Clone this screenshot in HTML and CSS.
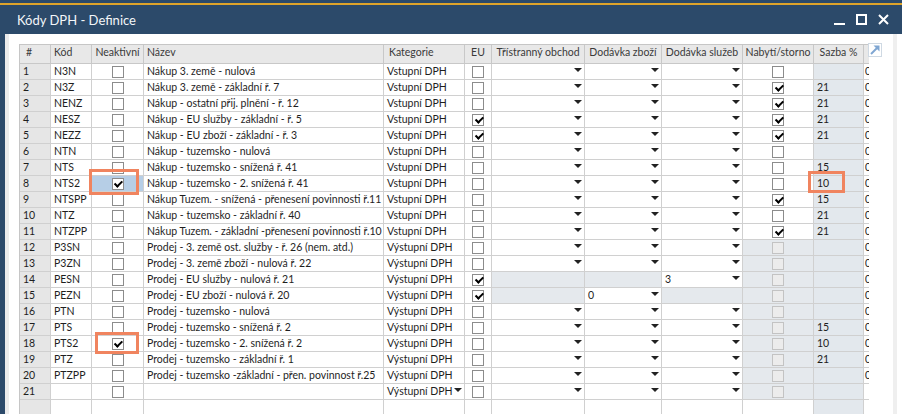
FILE: index.html
```html
<!DOCTYPE html>
<html>
<head>
    <meta charset="utf-8">
    <title>Kódy DPH - Definice</title>
    <link rel="stylesheet" href="styles.css">
</head>
<body>
    <div class="window">
        <div class="titlebar">
            <h1>Kódy DPH - Definice</h1>
            <div class="controls">
                <span class="ctl ctl-min"></span>
                <span class="ctl ctl-max"></span>
                <svg class="ctl" width="11" height="11" viewBox="0 0 11 11"><path d="M1 1L10 10M10 1L1 10" stroke="#fff" stroke-width="2"/></svg>
            </div>
        </div>
        <div class="frame">
            <div class="gutter"></div>
            <div class="content">
                <div class="grid-wrap">
                    <table class="grid">
                        <tr>
                            <th class="w-num">#</th>
                            <th class="w-code">Kód</th>
                            <th class="w-inact c">Neaktivní</th>
                            <th class="w-name">Název</th>
                            <th class="w-cat">Kategorie</th>
                            <th class="w-eu c">EU</th>
                            <th class="w-tri c">Třístranný obchod</th>
                            <th class="w-goods c">Dodávka zboží</th>
                            <th class="w-serv c">Dodávka služeb</th>
                            <th class="w-acq c">Nabytí/storno</th>
                            <th class="w-rate c">Sazba %</th>
                            <th class="w-rest"></th>
                        </tr>
                        <tr>
                            <td class="num">1</td><td>N3N</td><td class="chk"><i class="cb"></i></td><td>Nákup 3. země - nulová</td><td>Vstupní DPH</td><td class="chk"><i class="cb"></i></td>
                            <td class="drop"><div class="dd"><span></span><b class="arr"></b></div></td><td class="drop"><div class="dd"><span></span><b class="arr"></b></div></td><td class="drop"><div class="dd"><span></span><b class="arr"></b></div></td>
                            <td class="chk"><i class="cb"></i></td><td class="rate"></td><td class="cut">0</td>
                        </tr>
                        <tr>
                            <td class="num">2</td><td>N3Z</td><td class="chk"><i class="cb"></i></td><td>Nákup 3. země - základní ř. 7</td><td>Vstupní DPH</td><td class="chk"><i class="cb"></i></td>
                            <td class="drop"><div class="dd"><span></span><b class="arr"></b></div></td><td class="drop"><div class="dd"><span></span><b class="arr"></b></div></td><td class="drop"><div class="dd"><span></span><b class="arr"></b></div></td>
                            <td class="chk"><i class="cb on"></i></td><td class="rate">21</td><td class="cut">0</td>
                        </tr>
                        <tr>
                            <td class="num">3</td><td>NENZ</td><td class="chk"><i class="cb"></i></td><td>Nákup - ostatní přij. plnění - ř. 12</td><td>Vstupní DPH</td><td class="chk"><i class="cb"></i></td>
                            <td class="drop"><div class="dd"><span></span><b class="arr"></b></div></td><td class="drop"><div class="dd"><span></span><b class="arr"></b></div></td><td class="drop"><div class="dd"><span></span><b class="arr"></b></div></td>
                            <td class="chk"><i class="cb on"></i></td><td class="rate">21</td><td class="cut">0</td>
                        </tr>
                        <tr>
                            <td class="num">4</td><td>NESZ</td><td class="chk"><i class="cb"></i></td><td>Nákup - EU služby - základní - ř. 5</td><td>Vstupní DPH</td><td class="chk"><i class="cb on"></i></td>
                            <td class="drop"><div class="dd"><span></span><b class="arr"></b></div></td><td class="drop"><div class="dd"><span></span><b class="arr"></b></div></td><td class="drop"><div class="dd"><span></span><b class="arr"></b></div></td>
                            <td class="chk"><i class="cb on"></i></td><td class="rate">21</td><td class="cut">0</td>
                        </tr>
                        <tr>
                            <td class="num">5</td><td>NEZZ</td><td class="chk"><i class="cb"></i></td><td>Nákup - EU zboží - základní - ř. 3</td><td>Vstupní DPH</td><td class="chk"><i class="cb on"></i></td>
                            <td class="drop"><div class="dd"><span></span><b class="arr"></b></div></td><td class="drop"><div class="dd"><span></span><b class="arr"></b></div></td><td class="drop"><div class="dd"><span></span><b class="arr"></b></div></td>
                            <td class="chk"><i class="cb on"></i></td><td class="rate">21</td><td class="cut">0</td>
                        </tr>
                        <tr>
                            <td class="num">6</td><td>NTN</td><td class="chk"><i class="cb"></i></td><td>Nákup - tuzemsko - nulová</td><td>Vstupní DPH</td><td class="chk"><i class="cb"></i></td>
                            <td class="drop"><div class="dd"><span></span><b class="arr"></b></div></td><td class="drop"><div class="dd"><span></span><b class="arr"></b></div></td><td class="drop"><div class="dd"><span></span><b class="arr"></b></div></td>
                            <td class="chk"><i class="cb"></i></td><td class="rate"></td><td class="cut">0</td>
                        </tr>
                        <tr>
                            <td class="num">7</td><td>NTS</td><td class="chk"><i class="cb"></i></td><td>Nákup - tuzemsko - snížená ř. 41</td><td>Vstupní DPH</td><td class="chk"><i class="cb"></i></td>
                            <td class="drop"><div class="dd"><span></span><b class="arr"></b></div></td><td class="drop"><div class="dd"><span></span><b class="arr"></b></div></td><td class="drop"><div class="dd"><span></span><b class="arr"></b></div></td>
                            <td class="chk"><i class="cb"></i></td><td class="rate">15</td><td class="cut">0</td>
                        </tr>
                        <tr>
                            <td class="num">8</td><td>NTS2</td><td class="chk sel"><i class="cb on"></i></td><td>Nákup - tuzemsko - 2. snížená ř. 41</td><td>Vstupní DPH</td><td class="chk"><i class="cb"></i></td>
                            <td class="drop"><div class="dd"><span></span><b class="arr"></b></div></td><td class="drop"><div class="dd"><span></span><b class="arr"></b></div></td><td class="drop"><div class="dd"><span></span><b class="arr"></b></div></td>
                            <td class="chk"><i class="cb"></i></td><td class="rate">10</td><td class="cut">0</td>
                        </tr>
                        <tr>
                            <td class="num">9</td><td>NTSPP</td><td class="chk"><i class="cb"></i></td><td>Nákup Tuzem. - snížená - přenesení povinnosti ř.11</td><td>Vstupní DPH</td><td class="chk"><i class="cb"></i></td>
                            <td class="drop"><div class="dd"><span></span><b class="arr"></b></div></td><td class="drop"><div class="dd"><span></span><b class="arr"></b></div></td><td class="drop"><div class="dd"><span></span><b class="arr"></b></div></td>
                            <td class="chk"><i class="cb on"></i></td><td class="rate">15</td><td class="cut">0</td>
                        </tr>
                        <tr>
                            <td class="num">10</td><td>NTZ</td><td class="chk"><i class="cb"></i></td><td>Nákup - tuzemsko - základní ř. 40</td><td>Vstupní DPH</td><td class="chk"><i class="cb"></i></td>
                            <td class="drop"><div class="dd"><span></span><b class="arr"></b></div></td><td class="drop"><div class="dd"><span></span><b class="arr"></b></div></td><td class="drop"><div class="dd"><span></span><b class="arr"></b></div></td>
                            <td class="chk"><i class="cb"></i></td><td class="rate">21</td><td class="cut">0</td>
                        </tr>
                        <tr>
                            <td class="num">11</td><td>NTZPP</td><td class="chk"><i class="cb"></i></td><td>Nákup Tuzem. - základní -přenesení povinnosti ř.10</td><td>Vstupní DPH</td><td class="chk"><i class="cb"></i></td>
                            <td class="drop"><div class="dd"><span></span><b class="arr"></b></div></td><td class="drop"><div class="dd"><span></span><b class="arr"></b></div></td><td class="drop"><div class="dd"><span></span><b class="arr"></b></div></td>
                            <td class="chk"><i class="cb on"></i></td><td class="rate">21</td><td class="cut">0</td>
                        </tr>
                        <tr>
                            <td class="num">12</td><td>P3SN</td><td class="chk"><i class="cb"></i></td><td>Prodej - 3. země ost. služby - ř. 26 (nem. atd.)</td><td>Výstupní DPH</td><td class="chk"><i class="cb"></i></td>
                            <td class="drop"><div class="dd"><span></span><b class="arr"></b></div></td><td class="drop"><div class="dd"><span></span><b class="arr"></b></div></td><td class="drop"><div class="dd"><span></span><b class="arr"></b></div></td>
                            <td class="chk na"><i class="cb off"></i></td><td class="rate"></td><td class="cut">0</td>
                        </tr>
                        <tr>
                            <td class="num">13</td><td>P3ZN</td><td class="chk"><i class="cb"></i></td><td>Prodej - 3. země zboží - nulová ř. 22</td><td>Výstupní DPH</td><td class="chk"><i class="cb"></i></td>
                            <td class="drop"><div class="dd"><span></span><b class="arr"></b></div></td><td class="drop"><div class="dd"><span></span><b class="arr"></b></div></td><td class="drop"><div class="dd"><span></span><b class="arr"></b></div></td>
                            <td class="chk na"><i class="cb off"></i></td><td class="rate"></td><td class="cut">0</td>
                        </tr>
                        <tr>
                            <td class="num">14</td><td>PESN</td><td class="chk"><i class="cb"></i></td><td>Prodej - EU služby - nulová ř. 21</td><td>Výstupní DPH</td><td class="chk"><i class="cb on"></i></td>
                            <td class="na"></td><td class="na"></td><td class="drop"><div class="dd"><span>3</span><b class="arr"></b></div></td>
                            <td class="chk na"><i class="cb off"></i></td><td class="rate"></td><td class="cut">0</td>
                        </tr>
                        <tr>
                            <td class="num">15</td><td>PEZN</td><td class="chk"><i class="cb"></i></td><td>Prodej - EU zboží - nulová ř. 20</td><td>Výstupní DPH</td><td class="chk"><i class="cb on"></i></td>
                            <td class="na"></td><td class="drop"><div class="dd"><span>0</span><b class="arr"></b></div></td><td class="na"></td>
                            <td class="chk na"><i class="cb off"></i></td><td class="rate"></td><td class="cut">0</td>
                        </tr>
                        <tr>
                            <td class="num">16</td><td>PTN</td><td class="chk"><i class="cb"></i></td><td>Prodej - tuzemsko - nulová</td><td>Výstupní DPH</td><td class="chk"><i class="cb"></i></td>
                            <td class="drop"><div class="dd"><span></span><b class="arr"></b></div></td><td class="drop"><div class="dd"><span></span><b class="arr"></b></div></td><td class="drop"><div class="dd"><span></span><b class="arr"></b></div></td>
                            <td class="chk na"><i class="cb off"></i></td><td class="rate"></td><td class="cut">0</td>
                        </tr>
                        <tr>
                            <td class="num">17</td><td>PTS</td><td class="chk"><i class="cb"></i></td><td>Prodej - tuzemsko - snížená ř. 2</td><td>Výstupní DPH</td><td class="chk"><i class="cb"></i></td>
                            <td class="drop"><div class="dd"><span></span><b class="arr"></b></div></td><td class="drop"><div class="dd"><span></span><b class="arr"></b></div></td><td class="drop"><div class="dd"><span></span><b class="arr"></b></div></td>
                            <td class="chk na"><i class="cb off"></i></td><td class="rate">15</td><td class="cut">0</td>
                        </tr>
                        <tr>
                            <td class="num">18</td><td>PTS2</td><td class="chk"><i class="cb on"></i></td><td>Prodej - tuzemsko - 2. snížená ř. 2</td><td>Výstupní DPH</td><td class="chk"><i class="cb"></i></td>
                            <td class="drop"><div class="dd"><span></span><b class="arr"></b></div></td><td class="drop"><div class="dd"><span></span><b class="arr"></b></div></td><td class="drop"><div class="dd"><span></span><b class="arr"></b></div></td>
                            <td class="chk na"><i class="cb off"></i></td><td class="rate">10</td><td class="cut">0</td>
                        </tr>
                        <tr>
                            <td class="num">19</td><td>PTZ</td><td class="chk"><i class="cb"></i></td><td>Prodej - tuzemsko - základní ř. 1</td><td>Výstupní DPH</td><td class="chk"><i class="cb"></i></td>
                            <td class="drop"><div class="dd"><span></span><b class="arr"></b></div></td><td class="drop"><div class="dd"><span></span><b class="arr"></b></div></td><td class="drop"><div class="dd"><span></span><b class="arr"></b></div></td>
                            <td class="chk na"><i class="cb off"></i></td><td class="rate">21</td><td class="cut">0</td>
                        </tr>
                        <tr>
                            <td class="num">20</td><td>PTZPP</td><td class="chk"><i class="cb"></i></td><td>Prodej - tuzemsko -základní - přen. povinnost ř.25</td><td>Výstupní DPH</td><td class="chk"><i class="cb"></i></td>
                            <td class="drop"><div class="dd"><span></span><b class="arr"></b></div></td><td class="drop"><div class="dd"><span></span><b class="arr"></b></div></td><td class="drop"><div class="dd"><span></span><b class="arr"></b></div></td>
                            <td class="chk na"><i class="cb off"></i></td><td class="rate"></td><td class="cut">0</td>
                        </tr>
                        <tr>
                            <td class="num">21</td><td></td><td class="chk"><i class="cb"></i></td><td></td><td class="drop"><div class="dd"><span>Výstupní DPH</span><b class="arr"></b></div></td><td class="chk"><i class="cb"></i></td>
                            <td class="drop"><div class="dd"><span></span><b class="arr"></b></div></td><td class="drop"><div class="dd"><span></span><b class="arr"></b></div></td><td class="drop"><div class="dd"><span></span><b class="arr"></b></div></td>
                            <td class="chk na"><i class="cb off"></i></td><td class="rate"></td><td class="cut"></td>
                        </tr>
                        <tr>
                            <td class="num"></td><td></td><td></td><td></td><td></td><td></td>
                            <td></td><td></td><td></td>
                            <td></td><td class="rate"></td><td></td>
                        </tr>
                    </table>
                </div>
                <span class="expand">
                    <svg width="12" height="12" viewBox="0 0 12 12"><path d="M2 10L8 4" stroke="#7fa6d2" stroke-width="2"/><path d="M4.5 1.5H10.5V7.5Z" fill="#7fa6d2"/></svg>
                </span>
            </div>
            <div class="rside"></div>
        </div>
    </div>

    <!-- annotation boxes -->
    <div class="mark mark-a"></div>
    <div class="mark mark-b"></div>
    <div class="mark mark-c"></div>
</body>
</html>
```

FILE: styles.css
```css
body {
    margin: 0;
    width: 902px;
    height: 414px;
    overflow: hidden;
    font-family: Lato, "Open Sans", sans-serif;
    font-size: 10.5px;
    color: #1e1e1e;
    background-color: #fff;
}
.window {
    height: 414px;
    display: flex;
    flex-direction: column;
    padding-top: 3px;
    box-sizing: border-box;
    background-color: #2c4a6a;
}
.titlebar {
    height: 29px;
    border-top: 2px solid #dfa42a;
    display: flex;
    align-items: center;
    padding: 0 13px 0 17px;
    color: #f3f6f9;
}
.titlebar h1 {
    flex: 1;
    margin: 0;
    font-size: 13px;
    font-weight: normal;
}
.controls {
    display: flex;
    align-items: center;
    gap: 11px;
}
.ctl {
    display: block;
    width: 11px;
    height: 11px;
    box-sizing: border-box;
}
.ctl-min {
    border-bottom: 2px solid #fff;
}
.ctl-max {
    border: 2px solid #fff;
}
.frame {
    flex: 1;
    min-height: 0;
    display: flex;
    margin-left: 5px;
    background-color: #fff;
}
.gutter {
    width: 4px;
    background-color: #ebebeb;
}
.rside {
    width: 4px;
    margin-right: 5px;
    background-color: #efefef;
}
.content {
    flex: 1;
    display: flex;
    align-items: flex-start;
    padding: 10px 0 0 10px;
}
.grid-wrap {
    flex: none;
    width: 850px;
    overflow: hidden;
}
.expand {
    flex: none;
    width: 14px;
    height: 14px;
    margin: -1px 0 0 -1px;
    box-sizing: border-box;
    border: 1px solid #cfd9e3;
    display: flex;
    align-items: center;
    justify-content: center;
}

/* grid */
.grid {
    border-collapse: separate;
    border-spacing: 0;
    table-layout: fixed;
    width: 885px;
    border-top: 1px solid #c6c6c6;
    border-left: 1px solid #c6c6c6;
}
.grid th,
.grid td {
    box-sizing: border-box;
    border-right: 1px solid #d0d0d0;
    border-bottom: 1px solid #d0d0d0;
    padding: 0 3px;
    line-height: 15px;
    white-space: nowrap;
    overflow: hidden;
}
.grid th {
    height: 19px;
    background-color: #e8e8e8;
    border-color: #c8c8c8;
    color: #3a3a3a;
    font-weight: normal;
    text-align: left;
    vertical-align: top;
}
.grid th.c {
    text-align: center;
    padding: 0;
}
.grid td {
    height: 16px;
    vertical-align: middle;
}
.w-num { width: 31px; padding-left: 6px !important; }
.w-code { width: 41px; }
.w-inact { width: 52px; }
.w-name { width: 240px; }
.w-cat { width: 81px; padding-left: 5px !important; }
.w-eu { width: 27px; }
.w-tri { width: 93px; }
.w-goods { width: 77px; }
.w-serv { width: 81px; }
.w-acq { width: 71px; }
.w-rate { width: 50px; }
.w-rest { width: 40px; }

.grid td.num {
    background-color: #e6e6e6;
}
.grid td.rate {
    background-color: #e3e8ed;
}
.grid td.na {
    background-color: #e5e9ed;
}
.grid td.sel {
    background-color: #b6cee6;
}
.grid td.chk {
    padding: 0;
}
.grid td.drop {
    padding-right: 2px;
}
.grid td.cut {
    padding-left: 1px;
}
.dd {
    display: flex;
    justify-content: space-between;
    align-items: flex-start;
    height: 15px;
}
.arr {
    flex: none;
    width: 0;
    height: 0;
    margin-top: 4px;
    border-left: 4px solid transparent;
    border-right: 4px solid transparent;
    border-top: 4px solid #222;
}
.cb {
    display: block;
    position: relative;
    width: 12px;
    height: 12px;
    margin: 0 auto;
    box-sizing: border-box;
    border: 1px solid #8c8c8c;
    background-color: #fff;
}
.cb.off {
    border-color: #c3c3c3;
    background-color: #ececec;
}
.cb.on::after {
    content: "";
    position: absolute;
    left: 3.5px;
    top: 0.5px;
    width: 2.5px;
    height: 6px;
    border: solid #000;
    border-width: 0 2px 2px 0;
    transform: rotate(45deg);
}

/* annotation boxes */
.mark {
    position: absolute;
    box-sizing: border-box;
    border: 3px solid #f0845f;
}
.mark-a { left: 89px; top: 169px; width: 50px; height: 26px; }
.mark-b { left: 808px; top: 171px; width: 37px; height: 22px; }
.mark-c { left: 95px; top: 332px; width: 44px; height: 22px; }
```
